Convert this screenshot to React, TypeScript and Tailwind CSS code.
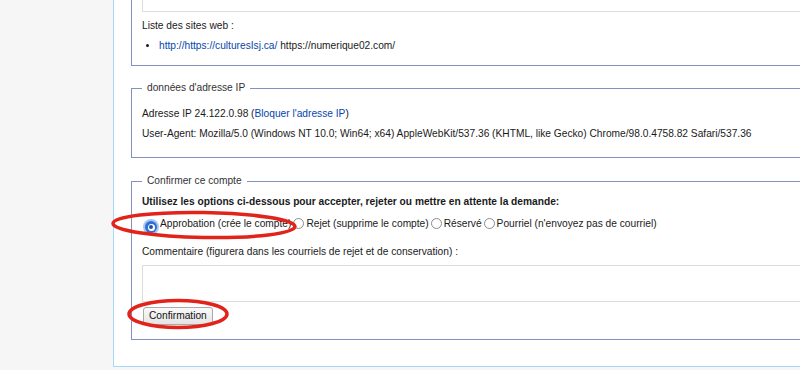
import React from 'react';

const Radio = ({ checked = false }: { checked?: boolean }) =>
    checked ? (
        <span className="inline-flex items-center justify-center w-[12px] h-[12px] rounded-full bg-[#2f6fd6] shadow-[0_0_0_2px_#a9c6f2] mx-[3px] align-[-2px]">
            <span className="flex items-center justify-center w-[7px] h-[7px] rounded-full bg-white">
                <span className="w-[4px] h-[4px] rounded-full bg-[#1f4fa8]" />
            </span>
        </span>
    ) : (
        <span className="inline-block w-[11px] h-[11px] rounded-full border border-[#8c8c8c] bg-white mx-[2px] align-[-2px]" />
    );

const Legend = ({ children }: { children: React.ReactNode }) => (
    <legend className="px-[5px] leading-[16px] text-[#333]">{children}</legend>
);

export default function App() {
    return (
        <div className="relative w-[800px] h-[370px] overflow-hidden bg-[#f6f6f6] font-['Liberation_Sans',Arial,sans-serif] text-[10.2px] leading-[16px] text-[#1a1a1a]">
            {/* main content panel */}
            <div className="ml-[113px] -mt-[30px] w-[800px] bg-white border-l border-b border-[#a7d7f9] px-[17px] pb-[26px]">
                {/* account request fieldset (top cut off) */}
                <fieldset className="border border-[#8391c0] px-[10px] pt-[10px] pb-[11px]">
                    <div className="h-[31px] border border-[#dddddd] bg-white" />
                    <p className="mt-[6px]">Liste des sites web :</p>
                    <ul className="mt-[4px] pl-[17px] list-disc">
                        <li>
                            <a href="#" className="text-[#0645ad]">http://https://culturesIsj.ca/</a> https://numerique02.com/
                        </li>
                    </ul>
                </fieldset>

                {/* IP data */}
                <fieldset className="mt-[14px] border border-[#8391c0] px-[10px] pb-[15px]">
                    <Legend>données d'adresse IP</Legend>
                    <p className="mt-[10px]">
                        Adresse IP 24.122.0.98 (<a href="#" className="text-[#0645ad]">Bloquer l'adresse IP</a>)
                    </p>
                    <p className="mt-[4px]">
                        User-Agent: Mozilla/5.0 (Windows NT 10.0; Win64; x64) AppleWebKit/537.36 (KHTML, like Gecko) Chrome/98.0.4758.82 Safari/537.36
                    </p>
                </fieldset>

                {/* confirm form */}
                <fieldset className="mt-[15px] border border-[#8391c0] px-[10px] pb-[14px]">
                    <Legend>Confirmer ce compte</Legend>
                    <p className="mt-[5px] font-bold">
                        Utilisez les options ci-dessous pour accepter, rejeter ou mettre en attente la demande:
                    </p>
                    <div className="mt-[6px] whitespace-nowrap">
                        <Radio checked />Approbation (crée le compte)
                        <Radio />Rejet (supprime le compte)
                        <Radio />Réservé
                        <Radio />Pourriel (n'envoyez pas de courriel)
                    </div>
                    <p className="mt-[11px]">Commentaire (figurera dans les courriels de rejet et de conservation) :</p>
                    <div className="mt-[5px] h-[37px] border border-[#dddddd] bg-white" />
                    <button className="mt-[5px] ml-px h-[18px] px-[5px] rounded-[3px] border border-[#a9a9a9] bg-gradient-to-b from-[#fafafa] to-[#e4e4e4] text-[10.2px] leading-[16px] text-[#111]">
                        Confirmation
                    </button>
                </fieldset>
            </div>

            {/* red annotation marks */}
            <svg className="absolute inset-0 pointer-events-none" width="800" height="370">
                <ellipse cx="204" cy="225" rx="91" ry="12.5" fill="none" stroke="#e2231a" strokeWidth="3.5" transform="rotate(1 204 225)" />
                <ellipse cx="178" cy="314" rx="49" ry="13.5" fill="none" stroke="#e2231a" strokeWidth="3.5" />
            </svg>
        </div>
    );
}
